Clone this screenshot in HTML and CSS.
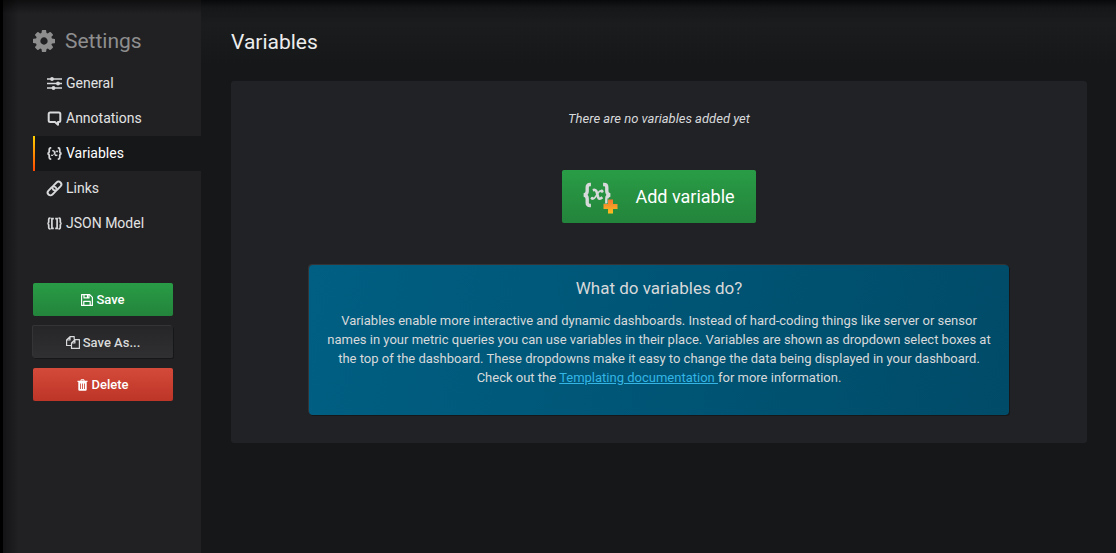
FILE: index.html
```html
<!DOCTYPE html>
<html lang="en">
<head>
<meta charset="utf-8">
<title>Settings - Variables</title>
<link rel="stylesheet" href="styles.css">
</head>
<body>
<div class="dashboard-settings">
  <aside class="sidebar">
    <h2 class="sidebar-title">
      <svg class="cog" viewBox="128 128 1536 1536" aria-hidden="true"><path fill="currentColor" d="M1152 896q0-106-75-181t-181-75-181 75-75 181 75 181 181 75 181-75 75-181zm512-109v222q0 12-8 23t-20 13l-185 28q-19 54-39 91 35 50 107 138 10 12 10 25t-9 23q-27 37-99 108t-94 71q-12 0-26-9l-138-108q-44 23-91 38-16 136-29 186-7 28-36 28h-222q-14 0-24.500-8.500t-11.500-21.500l-28-184q-49-16-90-37l-141 107q-10 9-25 9-14 0-25-11-126-114-165-168-7-10-7-23 0-12 8-23 15-21 51-66.500t54-70.500q-27-50-41-99l-183-27q-13-2-21-12.500t-8-23.500v-222q0-12 8-23t19-13l186-28q14-46 39-92-40-57-107-138-10-12-10-24 0-10 9-23 26-36 98.500-107.500t94.500-71.500q13 0 26 10l138 107q44-23 91-38 16-136 29-186 7-28 36-28h222q14 0 24.500 8.500t11.500 21.500l28 184q49 16 90 37l142-107q9-9 24-9 13 0 25 10 129 119 165 170 7 8 7 22 0 12-8 23-15 21-51 66.500t-54 70.500q26 50 41 98l183 28q13 2 21 12.500t8 23.500z"/></svg>
      Settings
    </h2>
    <nav class="nav">
      <a class="nav-item" href="#general">
        <svg class="nav-icon" viewBox="0 0 15 15" aria-hidden="true"><path d="M0 3h15M0 7.500h15M0 12h15" stroke="currentColor" stroke-width="1.600"/><circle cx="5" cy="3" r="1.900" fill="currentColor"/><circle cx="11" cy="7.500" r="1.900" fill="currentColor"/><circle cx="6.500" cy="12" r="1.900" fill="currentColor"/></svg>
        General
      </a>
      <a class="nav-item" href="#annotations">
        <svg class="nav-icon" viewBox="0 0 15 15" aria-hidden="true"><path d="M3.200 1.500h8.600q1.500 0 1.500 1.500v6.500q0 1.500-1.500 1.500h-.8v2.800l-3-2.800H3.200q-1.500 0-1.500-1.500V3q0-1.500 1.500-1.500z" fill="none" stroke="currentColor" stroke-width="2" stroke-linejoin="round"/></svg>
        Annotations
      </a>
      <a class="nav-item active" href="#variables" aria-current="page">
        <svg class="nav-icon" viewBox="0 0 30 30" aria-hidden="true"><use href="#variable-shape"/></svg>
        Variables
      </a>
      <a class="nav-item" href="#links">
        <svg class="nav-icon" viewBox="0 0 15 15" aria-hidden="true"><g transform="rotate(-45 7.500 7.500)" fill="none" stroke="currentColor" stroke-width="1.900" stroke-linecap="round"><path d="M6.500 10.300H1.800a2.800 2.800 0 0 1 0-5.600h4.700a2.800 2.800 0 0 1 2.300 4.200"/><path d="M8.500 4.700h4.700a2.800 2.800 0 0 1 0 5.600H8.500a2.800 2.800 0 0 1-2.300-4.200"/></g></svg>
        Links
      </a>
      <a class="nav-item" href="#json">
        <svg class="nav-icon" viewBox="0 0 15 15" aria-hidden="true"><path d="M3.500 2.200h-.7q-1.100 0-1.100 1.200v2.500q0 1.300-1.200 1.600q1.200.3 1.200 1.600v2.500q0 1.200 1.100 1.200h.7M11.500 2.200h.7q1.100 0 1.100 1.200v2.500q0 1.300 1.200 1.600q-1.200.3-1.200 1.600v2.500q0 1.200-1.100 1.200h-.7M6.800 2.600H4.900v9.800h1.900M8.200 2.600h1.900v9.800H8.200" fill="none" stroke="currentColor" stroke-width="1.700"/></svg>
        JSON Model
      </a>
    </nav>
    <div class="actions">
      <button class="btn btn-success" type="button">
        <svg class="btn-icon" viewBox="0 0 12 12" aria-hidden="true"><path d="M.6.6h8.100l2.700 2.700v8.100H.6zM3 .6v3.300h5V.6M2.800 11.400V7.300h6.400v4.100M6.500 1v2.300" fill="none" stroke="currentColor" stroke-width="1.200" stroke-linejoin="round"/></svg>
        Save
      </button>
      <button class="btn btn-inverse" type="button">
        <svg class="btn-icon wide" viewBox="0 0 14 13" aria-hidden="true"><path d="M5.500 9.500H.6V4L4 .6h4.200v3M4 .6V4H.6M8.900 3.600h4.500v8.800H5.500V7zM8.900 3.600V7H5.500" fill="none" stroke="currentColor" stroke-width="1.200" stroke-linejoin="round"/></svg>
        Save As...
      </button>
      <button class="btn btn-danger" type="button">
        <svg class="btn-icon narrow" viewBox="0 0 11 12" aria-hidden="true"><path fill="currentColor" fill-rule="evenodd" d="M3.300 1.700 4 .3h3l.7 1.400h2.800v1.200h-.8v7.600q0 1.300-1.100 1.300H2.400q-1.100 0-1.100-1.300V2.900H.5V1.700zM4.300 1.700h2.400l-.3-.5H4.600zM3 4.400v5.600h.8V4.400zm2.100 0v5.600h.8V4.400zm2.100 0v5.600H8V4.400z"/></svg>
        Delete
      </button>
    </div>
  </aside>
  <main class="content">
    <h1 class="page-title">Variables</h1>
    <section class="empty-list">
      <p class="empty-text">There are no variables added yet</p>
      <button class="btn-cta" type="button">
        <svg class="cta-icon" viewBox="0 0 36 34" aria-hidden="true">
          <defs>
            <g id="variable-shape">
              <path d="M8.500 3.800H7.500q-3 0-3 3v4.200q0 3.300-3.500 4q3.500.7 3.500 4v4.200q0 3 3 3h1M21.500 3.800h1q3 0 3 3v4.200q0 3.300 3.500 4q-3.500.7-3.500 4v4.200q0 3-3 3h-1" fill="none" stroke="currentColor" stroke-width="3.600"/>
              <path d="M10.500 9.800q3.300-1 4.200 2.200l1.500 5.200q.9 3.400 4.600.2" fill="none" stroke="currentColor" stroke-width="2.800"/>
              <path d="M20.500 10.500q-2.300-.8-4.500 2.400l-2.500 4q-1.800 3-4 2" fill="none" stroke="currentColor" stroke-width="1.700"/>
              <circle cx="20.300" cy="10.900" r="1.700" fill="currentColor"/>
              <circle cx="9.900" cy="18.500" r="1.700" fill="currentColor"/>
            </g>
            <linearGradient id="plus-fill" x1="0" y1="0" x2="0" y2="1"><stop offset="0" stop-color="#f1772f"/><stop offset="1" stop-color="#fbbd20"/></linearGradient>
          </defs>
          <svg x="0" y="1" width="28" height="28" viewBox="0 0 30 30"><use href="#variable-shape"/></svg>
          <path d="M24.500 18.500h6v5H35v6h-4.500V34h-6v-4.500H20v-6h4.500z" fill="#28903e"/>
          <path d="M25 19.500h5v4.500h4.500v5H30v4.500h-5V29h-4.500v-5H25z" fill="url(#plus-fill)"/>
        </svg>
        Add variable
      </button>
      <div class="info-box">
        <h2 class="info-title">What do variables do?</h2>
        <p class="info-text">Variables enable more interactive and dynamic dashboards. Instead of hard-coding things like server or sensor names in your metric queries you can use variables in their place. Variables are shown as dropdown select boxes at the top of the dashboard. These dropdowns make it easy to change the data being displayed in your dashboard. Check out the <a class="info-link" href="#templating">Templating documentation </a>for more information.</p>
      </div>
    </section>
  </main>
</div>
</body>
</html>
```
FILE: styles.css
```css
* {
  box-sizing: border-box;
}

body {
  margin: 0;
  background: #161719;
  color: #d8d9da;
  font: 13px/19px Roboto, sans-serif;
}

h1,
h2,
p {
  margin: 0;
  font-weight: 400;
}

.dashboard-settings {
  display: flex;
  min-height: 100vh;
  border-left: 3px solid #000;
  background: linear-gradient(180deg, #08090a 0, #161719 8px, #1b1c1d 24px, #161719 64px);
}

.sidebar {
  flex: 0 0 198px;
  padding: 26px 0 30px 30px;
  background:
    linear-gradient(180deg, rgba(0, 0, 0, 0.55), rgba(0, 0, 0, 0) 14px),
    linear-gradient(90deg, rgba(0, 0, 0, 0.4), rgba(0, 0, 0, 0) 16px),
    #212124;
}

.sidebar-title {
  display: flex;
  align-items: center;
  gap: 10px;
  color: #8e8e8e;
  font-size: 21px;
  line-height: 30px;
}

.cog {
  width: 22px;
  height: 22px;
}

.nav {
  display: flex;
  flex-direction: column;
  margin-top: 10px;
}

.nav-item {
  display: flex;
  align-items: center;
  gap: 4px;
  height: 35px;
  padding-left: 14px;
  color: #e3e3e3;
  font-size: 14px;
  text-decoration: none;
}

.nav-item.active {
  padding-left: 12px;
  border-left: 2px solid;
  border-image: linear-gradient(180deg, #ffd500, #ff4400) 1;
  background: #161719;
  color: #fff;
}

.nav-icon {
  width: 15px;
  height: 15px;
  overflow: visible;
  color: #d8d9da;
}

.actions {
  display: flex;
  flex-direction: column;
  gap: 10px;
  width: 140px;
  margin-top: 42px;
}

.btn {
  display: flex;
  align-items: center;
  justify-content: center;
  gap: 3px;
  height: 32px;
  padding: 0;
  border: 0;
  border-radius: 2px;
  color: #fff;
  font: 500 13px/19px Roboto, sans-serif;
}

.btn-icon {
  width: 12px;
  height: 12px;
}

.btn-icon.wide {
  width: 14px;
  height: 13px;
}

.btn-icon.narrow {
  width: 11px;
}

.btn-success,
.btn-danger {
  height: 33px;
}

.btn-success {
  background: linear-gradient(180deg, #299c46, #23843b);
}

.btn-inverse {
  background: linear-gradient(180deg, #262628, #303032);
  box-shadow: -1px -1px 0 0 #343436, 1px 1px 0 0 #161719;
  color: #d8d9da;
}

.btn-danger {
  background: linear-gradient(180deg, #d44a3a, #bd3527);
}

.content {
  flex: 1;
  padding: 27px 29px 30px 30px;
}

.page-title {
  color: #ececec;
  font-size: 21px;
  line-height: 30px;
}

.empty-list {
  display: flex;
  flex-direction: column;
  align-items: center;
  margin-top: 24px;
  padding: 28px;
  border-radius: 3px;
  background: #212226;
}

.empty-text {
  font-style: italic;
}

.btn-cta {
  display: flex;
  align-items: center;
  gap: 16px;
  height: 53px;
  margin: 42px 0;
  padding: 0 21px;
  border: 0;
  border-radius: 2px;
  background: linear-gradient(180deg, #299c46, #23843b);
  color: #fff;
  font: 18px/27px Roboto, sans-serif;
}

.cta-icon {
  width: 36px;
  height: 34px;
  color: #d8d9da;
}

.info-box {
  width: 100%;
  max-width: 700px;
  padding: 13px 16px 28px;
  border-radius: 4px;
  background: linear-gradient(100deg, #005f83, #004b68);
  box-shadow: -1px -1px 0 0 #343436, 1px 1px 0 0 #161719;
  text-align: center;
}

.info-title {
  margin-bottom: 13px;
  font-size: 17px;
  line-height: 20px;
}

.info-link {
  color: #33b5e5;
}
```
